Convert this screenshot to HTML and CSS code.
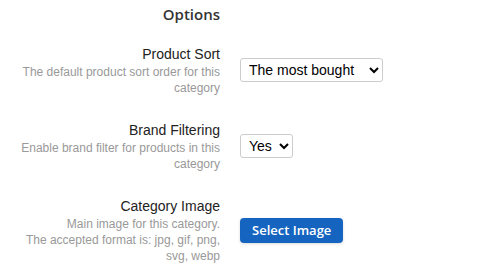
FILE: index.html
```html
<!DOCTYPE html>
<html lang="en">
<head>
    <meta charset="UTF-8">
    <meta name="viewport" content="width=device-width, initial-scale=1.0">
    <title>Category Options</title>
    <link rel="stylesheet" href="styles.css">
</head>
<body>

<div class="options">
    <h3 class="options-title">Options</h3>

    <div class="option-row">
        <div class="option-label">
            <label for="productSort">Product Sort</label>
            <p class="hint">The default product sort order for this category</p>
        </div>
        <div class="option-control">
            <select id="productSort" class="select-wide">
                <option>The most bought</option>
                <option>Newest</option>
                <option>Price: low to high</option>
                <option>Price: high to low</option>
            </select>
        </div>
    </div>

    <div class="option-row">
        <div class="option-label">
            <label for="brandFilter">Brand Filtering</label>
            <p class="hint">Enable brand filter for products in this category</p>
        </div>
        <div class="option-control">
            <select id="brandFilter">
                <option>Yes</option>
                <option>No</option>
            </select>
        </div>
    </div>

    <div class="option-row">
        <div class="option-label">
            <label>Category Image</label>
            <p class="hint">Main image for this category.<br>The accepted format is: jpg, gif, png, svg, webp</p>
        </div>
        <div class="option-control">
            <button class="btn-primary" type="button">Select Image</button>
        </div>
    </div>
</div>

</body>
</html>
```

FILE: styles.css
```css
body {
    font-family: "Liberation Sans", Arial, sans-serif;
    margin: 0;
    padding: 0;
    background-color: #fff;
    color: #222;
}
.options {
    padding: 3px 8px 0 8px;
}
.options-title {
    width: 212px;
    margin: 0 0 19px 0;
    text-align: right;
    font-family: "Open Sans", sans-serif;
    font-size: 15px;
    font-weight: 600;
    line-height: 22px;
    color: #333;
}
.option-row {
    display: grid;
    grid-template-columns: 212px 1fr;
    column-gap: 20px;
    align-items: center;
    margin-bottom: 24px;
}
.option-label {
    text-align: right;
}
.option-label label {
    display: block;
    font-size: 14px;
    line-height: 20px;
    color: #222;
}
.hint {
    margin: 0;
    font-size: 12px;
    line-height: 16px;
    color: #999;
}
.option-control select {
    font-family: "Liberation Sans", Arial, sans-serif;
    font-size: 14px;
    height: 24px;
    padding: 0 4px;
    border: 1px solid #ccc;
    border-radius: 3px;
    background-color: #fff;
    color: #000;
}
.option-control .select-wide {
    width: 143px;
}
.btn-primary {
    font-family: "Open Sans", sans-serif;
    font-size: 13px;
    font-weight: 600;
    height: 25px;
    padding: 0 12px;
    background-color: #1565c0;
    color: white;
    border: none;
    border-radius: 4px;
    box-shadow: 0 1px 3px rgba(0, 0, 0, 0.15);
    cursor: pointer;
}
```
